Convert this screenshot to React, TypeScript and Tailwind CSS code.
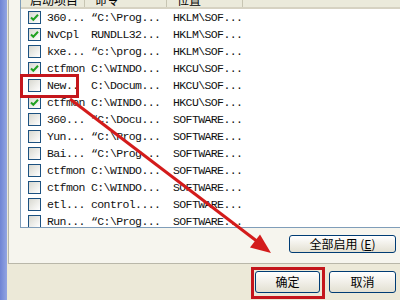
type Row = { on: boolean; name: string; cmd: string; loc: string };

const rows: Row[] = [
  { on: true, name: '360...', cmd: '“C:\\Prog...', loc: 'HKLM\\SOF...' },
  { on: true, name: 'NvCpl', cmd: 'RUNDLL32...', loc: 'HKLM\\SOF...' },
  { on: false, name: 'kxe...', cmd: '“c:\\prog...', loc: 'HKLM\\SOF...' },
  { on: true, name: 'ctfmon', cmd: 'C:\\WINDO...', loc: 'HKCU\\SOF...' },
  { on: false, name: 'New..', cmd: 'C:\\Docum...', loc: 'HKCU\\SOF...' },
  { on: true, name: 'ctfmon', cmd: 'C:\\WINDO...', loc: 'HKCU\\SOF...' },
  { on: false, name: '360...', cmd: '“C:\\Docu...', loc: 'SOFTWARE...' },
  { on: false, name: 'Yun...', cmd: '“C:\\Prog...', loc: 'SOFTWARE...' },
  { on: false, name: 'Bai...', cmd: '“C:\\Prog...', loc: 'SOFTWARE...' },
  { on: false, name: 'ctfmon', cmd: 'C:\\WINDO...', loc: 'SOFTWARE...' },
  { on: false, name: 'ctfmon', cmd: 'C:\\WINDO...', loc: 'SOFTWARE...' },
  { on: false, name: 'etl...', cmd: 'control....', loc: 'SOFTWARE...' },
  { on: false, name: 'Run...', cmd: '“C:\\Prog...', loc: 'SOFTWARE...' },
];

function CheckBox({ on }: { on: boolean }) {
  return (
    <span className="w-[13px] h-[13px] shrink-0 border border-[#1c5180] bg-gradient-to-br from-[#d8d8d0] to-white flex items-center justify-center">
      {on ? (
        <svg viewBox="0 0 11 11" className="w-[11px] h-[11px]" aria-hidden="true">
          <path d="M2 5.5 L4.3 7.8 L9 2.8" fill="none" stroke="#21a121" strokeWidth="2" />
        </svg>
      ) : null}
    </span>
  );
}

function XpButton({ children, className }: { children: React.ReactNode; className: string }) {
  return (
    <div
      className={
        'flex items-center justify-center rounded-[3px] border border-[#003c74] bg-gradient-to-b from-white to-[#e3e0d2] text-[12px] text-black ' +
        className
      }
    >
      {children}
    </div>
  );
}

export default function App() {
  return (
    <div
      className="relative w-[400px] h-[300px] overflow-hidden flex bg-[#ece9d8]"
      style={{ fontFamily: '"Liberation Mono", "Noto Sans CJK SC", monospace' }}
    >
      <div className="w-[7px] shrink-0 bg-gradient-to-r from-[#6f84d4] to-[#93a5e2]" />
      <div className="flex-1 flex flex-col pl-px">
        <div className="h-[264px] shrink-0 border-l border-b border-[#b9b7a9] bg-[#f6f5ee] pl-[11px] flex flex-col">
          <div className="h-[228px] shrink-0 border-l border-b border-[#7f9db9] bg-white overflow-hidden flex flex-col">
            <div className="h-[9px] shrink-0 flex bg-[#ebeadb] border-b-2 border-[#d6d2c2] overflow-hidden text-[12px] leading-[14px] text-black" style={{ fontFamily: '"Noto Sans CJK SC", sans-serif' }}>
              <div className="w-[64px] shrink-0 border-r border-[#c7c5b2] pl-[9px] -mt-[7px]">启动项目</div>
              <div className="w-[82px] shrink-0 border-r border-[#c7c5b2] pl-[10px] -mt-[7px]">命令</div>
              <div className="w-[76px] shrink-0 border-r border-[#c7c5b2] pl-[10px] -mt-[7px]">位置</div>
              <div className="flex-1" />
            </div>
            {rows.map((r, i) => (
              <div key={i} className="h-[17px] shrink-0 flex items-center text-[11.5px] tracking-[-0.6px] text-[#111]">
                <div className="w-[64px] shrink-0 flex items-center gap-[6px] pl-[7px]">
                  <CheckBox on={r.on} />
                  <span className="whitespace-pre">{r.name}</span>
                </div>
                <div className="w-[82px] shrink-0 pl-[6px] whitespace-pre">{r.cmd}</div>
                <div className="w-[76px] shrink-0 pl-[6px] whitespace-pre">{r.loc}</div>
              </div>
            ))}
          </div>
          <div className="flex justify-end pr-[4px] pt-[7px]">
            <XpButton className="w-[107px] h-[18px]">
              <span style={{ fontFamily: '"Noto Sans CJK SC", sans-serif' }}>
                全部启用 (<span className="underline">E</span>)
              </span>
            </XpButton>
          </div>
        </div>
        <div className="flex justify-end gap-[9px] pr-[4px] pt-[7px]" style={{ fontFamily: '"Noto Sans CJK SC", sans-serif' }}>
          <XpButton className="w-[65px] h-[22px]">确定</XpButton>
          <XpButton className="w-[67px] h-[22px]">取消</XpButton>
        </div>
      </div>

      <div className="absolute left-[20px] top-[74px] w-[59px] h-[24px] border-[3px] border-[#c4161c]" />
      <div className="absolute left-[251px] top-[267px] w-[74px] h-[32px] border-[3px] border-[#c4161c]" />
      <svg className="absolute inset-0 pointer-events-none" width="400" height="300" aria-hidden="true">
        <line x1="70" y1="99" x2="258" y2="242" stroke="#d31b1b" strokeWidth="3" />
        <polygon points="271,253 250,247.5 260,234.5" fill="#d31b1b" />
      </svg>
    </div>
  );
}
